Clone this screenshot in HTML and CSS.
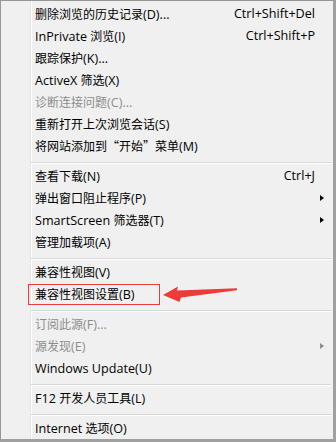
FILE: index.html
```html
<!DOCTYPE html>
<html lang="zh-CN">
<head>
  <meta charset="UTF-8" />
  <title>工具菜单</title>
  <link rel="stylesheet" href="styles.css">
</head>
<body>
  <div class="menu">
    <div class="item"><span class="label">删除浏览的历史记录<span class="en">(D)...</span></span><span class="key en">Ctrl+Shift+Del</span><span class="sub"></span></div>
    <div class="item"><span class="label"><span class="en">InPrivate </span>浏览<span class="en">(I)</span></span><span class="key en">Ctrl+Shift+P</span><span class="sub"></span></div>
    <div class="item"><span class="label">跟踪保护<span class="en">(K)...</span></span><span class="sub"></span></div>
    <div class="item"><span class="label"><span class="en">ActiveX </span>筛选<span class="en">(X)</span></span><span class="sub"></span></div>
    <div class="item disabled"><span class="label">诊断连接问题<span class="en">(C)...</span></span><span class="sub"></span></div>
    <div class="item"><span class="label">重新打开上次浏览会话<span class="en">(S)</span></span><span class="sub"></span></div>
    <div class="item"><span class="label">将网站添加到“开始”菜单<span class="en">(M)</span></span><span class="sub"></span></div>
    <div class="sep"></div>
    <div class="item"><span class="label">查看下载<span class="en">(N)</span></span><span class="key en">Ctrl+J</span><span class="sub"></span></div>
    <div class="item"><span class="label">弹出窗口阻止程序<span class="en">(P)</span></span><span class="sub"><i class="arrow"></i></span></div>
    <div class="item"><span class="label"><span class="en">SmartScreen </span>筛选器<span class="en">(T)</span></span><span class="sub"><i class="arrow"></i></span></div>
    <div class="item"><span class="label">管理加载项<span class="en">(A)</span></span><span class="sub"></span></div>
    <div class="sep"></div>
    <div class="item"><span class="label">兼容性视图<span class="en">(V)</span></span><span class="sub"></span></div>
    <div class="item"><span class="label">兼容性视图设置<span class="en">(B)</span></span><span class="sub"></span></div>
    <div class="sep"></div>
    <div class="item disabled"><span class="label">订阅此源<span class="en">(F)...</span></span><span class="sub"></span></div>
    <div class="item disabled"><span class="label">源发现<span class="en">(E)</span></span><span class="sub"><i class="arrow"></i></span></div>
    <div class="item"><span class="label"><span class="en">Windows Update(U)</span></span><span class="sub"></span></div>
    <div class="sep"></div>
    <div class="item"><span class="label"><span class="en">F12 </span>开发人员工具<span class="en">(L)</span></span><span class="sub"></span></div>
    <div class="sep"></div>
    <div class="item"><span class="label"><span class="en">Internet </span>选项<span class="en">(O)</span></span><span class="sub"></span></div>

    <!-- annotation drawn over the menu -->
    <div class="mark"></div>
    <svg class="pointer" width="336" height="442" viewBox="0 0 336 442">
      <polygon points="163,295 178,286.5 177,290.5 237,288.3 237,290.2 181,297.5 179.5,302" fill="#f03a3a" />
    </svg>
  </div>
</body>
</html>
```

FILE: styles.css
```css
* {
  box-sizing: border-box;
  margin: 0;
  padding: 0;
}

body {
  font-family: 'Noto Sans CJK SC', sans-serif;
  font-size: 12px;
  color: #000;
  background: #fff;
}

.menu {
  position: relative;
  width: 336px;
  height: 442px;
  padding-top: 2px;
  border-top: 1px solid #979797;
  border-left: 1px solid #979797;
  border-right: 3px solid #a0a0a0;
  border-bottom: 3px solid #a0a0a0;
  background-color: #f0f0f0;
  /* icon gutter lines */
  background-image: linear-gradient(to right,
    transparent 29px, #e2e3e3 29px, #e2e3e3 30px,
    #fff 30px, #fff 31px, transparent 31px);
  display: flex;
  flex-direction: column;
}

.item {
  height: 22px;
  line-height: 22px;
  display: flex;
  align-items: center;
  padding-left: 34px;
  white-space: pre;
}

.label {
  flex: 1;
}

/* latin runs: Segoe UI stand-in */
.en {
  font-family: 'Open Sans', sans-serif;
  font-size: 12.6px;
}

.key {
  text-align: right;
}

.sub {
  width: 18px;
  height: 22px;
  display: flex;
  align-items: center;
  padding-left: 5px;
}

.arrow {
  width: 0;
  height: 0;
  border-left: 4px solid #000;
  border-top: 3.5px solid transparent;
  border-bottom: 3.5px solid transparent;
}

.disabled {
  color: #8d8d8d;
}

.disabled .arrow {
  border-left-color: #8d8d8d;
}

.sep {
  height: 8px;
  padding-top: 5px;
  margin: 0 2px 0 30px;
}

.sep::before {
  content: '';
  display: block;
  border-top: 1px solid #d7d7d7;
  border-bottom: 1px solid #fff;
}

.mark {
  position: absolute;
  left: 27px;
  top: 283px;
  width: 132px;
  height: 21px;
  border: 1px solid #f03a3a;
}

.pointer {
  position: absolute;
  left: -1px;
  top: -1px;
  pointer-events: none;
}
```
